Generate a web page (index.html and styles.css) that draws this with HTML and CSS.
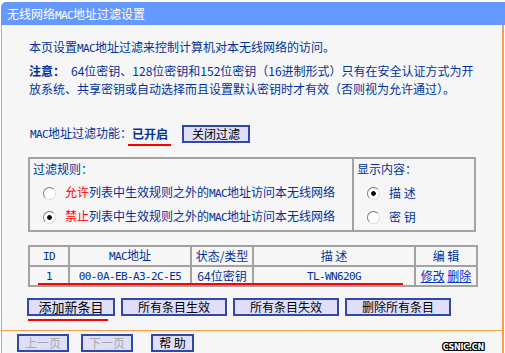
FILE: index.html
```html
<!DOCTYPE html>
<html lang="zh-CN">
<head>
<meta charset="utf-8">
<title>无线网络MAC地址过滤设置</title>
<link rel="stylesheet" href="styles.css">
</head>
<body>
<div class="page">
  <div class="title">无线网络<span class="en">MAC</span>地址过滤设置</div>
  <div class="main">
    <p class="intro">本页设置<span class="en">MAC</span>地址过滤来控制计算机对本无线网络的访问。</p>
    <p class="note"><b>注意：</b>　64位密钥、128位密钥和152位密钥（16进制形式）只有在安全认证方式为开<br>放系统、共享密钥或自动选择而且设置默认密钥时才有效（否则视为允许通过）。</p>
    <div class="status-row">
      <span><span class="en">MAC</span>地址过滤功能：</span><b class="on">已开启</b>
      <button class="btn btn-close" type="button">关闭过滤</button>
    </div>
    <div class="filter-box">
      <div class="col rules">
        <div class="box-title">过滤规则：</div>
        <label class="opt"><input type="radio" name="rule"><span><em>允许</em>列表中生效规则之外的<span class="en">MAC</span>地址访问本无线网络</span></label>
        <label class="opt"><input type="radio" name="rule" checked><span><em>禁止</em>列表中生效规则之外的<span class="en">MAC</span>地址访问本无线网络</span></label>
      </div>
      <div class="col show">
        <div class="box-title">显示内容：</div>
        <label class="opt"><input type="radio" name="show" checked><span>描 述</span></label>
        <label class="opt"><input type="radio" name="show"><span>密 钥</span></label>
      </div>
    </div>
    <div class="table-wrap">
      <table class="list">
        <colgroup>
          <col class="c-id"><col class="c-mac"><col class="c-type"><col class="c-desc"><col class="c-edit">
        </colgroup>
        <tr>
          <th><span class="en">ID</span></th>
          <th><span class="en">MAC</span>地址</th>
          <th>状态/类型</th>
          <th>描 述</th>
          <th>编 辑</th>
        </tr>
        <tr>
          <td><span class="en">1</span></td>
          <td><span class="en">00-0A-EB-A3-2C-E5</span></td>
          <td>64位密钥</td>
          <td><span class="en">TL-WN620G</span></td>
          <td><a href="#">修改</a> <a href="#">删除</a></td>
        </tr>
      </table>
      <span class="mark mark-row"></span>
    </div>
    <div class="btn-row">
      <button class="btn btn-add" type="button">添加新条目</button>
      <button class="btn btn-wide" type="button">所有条目生效</button>
      <button class="btn btn-wide" type="button">所有条目失效</button>
      <button class="btn btn-wide" type="button">删除所有条目</button>
      <span class="mark mark-add"></span>
    </div>
  </div>
  <div class="footer">
    <button class="btn btn-nav" type="button" disabled>上一页</button>
    <button class="btn btn-nav" type="button" disabled>下一页</button>
    <button class="btn btn-help" type="button">帮 助</button>
    <span class="watermark">CSNIC.CN</span>
  </div>
</div>
</body>
</html>
```
FILE: styles.css
```css
* { box-sizing: border-box; }

body {
  margin: 0;
  background: #fff;
  font: 12px/18px "Noto Sans CJK SC", sans-serif;
  color: #003399;
}

.en {
  font-family: "DejaVu Sans Mono", monospace;
  font-size: 11px;
  letter-spacing: -0.6px;
}

.page {
  margin: 2px 0 0 1px;
}

.title {
  height: 23px;
  line-height: 23px;
  padding-left: 6px;
  background: #6699ff;
  color: #fff;
  border-radius: 5px 0 0 0;
}

.main {
  width: 503px;
  background: #f6f6f6;
  border-left: 1px solid #f7a04a;
  border-right: 2px solid #f7a04a;
  border-bottom: 1px solid #f7a04a;
  padding: 13px 0 14px 26px;
}

.intro, .note {
  margin: 0;
  padding-left: 1px;
}

.note {
  margin-top: 4px;
  white-space: nowrap;
}

.status-row {
  margin-top: 27px;
  height: 18px;
  display: flex;
  align-items: center;
  padding-left: 2px;
}

.on {
  position: relative;
  margin-right: 14px;
}

.on::after {
  content: "";
  position: absolute;
  left: -4px;
  right: -3px;
  top: 19px;
  height: 2px;
  background: #ff0000;
}

.btn {
  height: 18px;
  padding: 0;
  font: 12px/14px "Noto Sans CJK SC", sans-serif;
  color: #000;
  background: #dfdffc;
  border: 2px solid #3148a6;
  border-radius: 0;
}

.btn-close { width: 68px; }

.filter-box {
  margin-top: 14px;
  width: 448px;
  height: 75px;
  border: 2px solid #a2a2a2;
  display: grid;
  grid-template-columns: 322px 1fr;
}

.col {
  padding: 1px 0 0 3px;
}

.show {
  border-left: 2px solid #a2a2a2;
}

.box-title {
  height: 18px;
}

.opt {
  display: flex;
  align-items: center;
  height: 18px;
  margin-top: 6px;
  padding-left: 10px;
  white-space: nowrap;
}

.opt em {
  font-style: normal;
  color: #ff0000;
}

.opt input {
  appearance: none;
  -webkit-appearance: none;
  width: 13px;
  height: 13px;
  margin: 0 9px 0 0;
  border-radius: 50%;
  border: 1px solid;
  border-color: #7a7a7a #dcdcdc #dcdcdc #7a7a7a;
  background: #fff;
  flex: none;
}

.opt input:checked {
  background: radial-gradient(circle, #000 0 2px, #fff 2.6px);
}

.table-wrap {
  position: relative;
  margin-top: 13px;
  width: 448px;
}

.list {
  width: 448px;
  border-collapse: collapse;
  table-layout: fixed;
}

.c-id { width: 40px; }
.c-mac { width: 122px; }
.c-type { width: 62px; }
.c-desc { width: 162px; }
.c-edit { width: 62px; }

.list th, .list td {
  border: 2px solid #a2a2a2;
  height: 17px;
  padding: 0;
  line-height: 16px;
  text-align: center;
  font-weight: normal;
  white-space: nowrap;
}

.list a {
  color: #0033cc;
  text-decoration: underline;
}

.mark {
  position: absolute;
  height: 2px;
  background: #ff0000;
}

.mark-row {
  left: 10px;
  top: 38px;
  width: 365px;
}

.btn-row {
  position: relative;
  margin: 11px 0 0 -1px;
  display: flex;
  gap: 6px;
}

.btn-add {
  width: 88px;
  font-size: 13px;
}

.btn-wide { width: 106px; }

.mark-add {
  left: 1px;
  top: 21px;
  width: 80px;
}

.footer {
  position: relative;
  width: 503px;
  height: 26px;
  background: #f6f6f6;
  border-left: 1px solid #f7a04a;
  border-right: 2px solid #f7a04a;
  border-bottom: 1px solid #f7a04a;
  padding: 3px 0 0 15px;
  display: flex;
  align-items: flex-start;
  gap: 12px;
}

.btn-nav {
  width: 52px;
  color: #a8a8a8;
}

.btn-help {
  width: 43px;
  margin-left: 6px;
}

.watermark {
  position: absolute;
  right: 18px;
  top: 12px;
  font: bold 8px/9px "DejaVu Sans", sans-serif;
  color: #fff;
  letter-spacing: -0.2px;
  text-shadow: 1px 0 0 #000, -1px 0 0 #000, 0 1px 0 #000, 0 -1px 0 #000,
               1px 1px 0 #000, -1px -1px 0 #000, 1px -1px 0 #000, -1px 1px 0 #000;
}
```
